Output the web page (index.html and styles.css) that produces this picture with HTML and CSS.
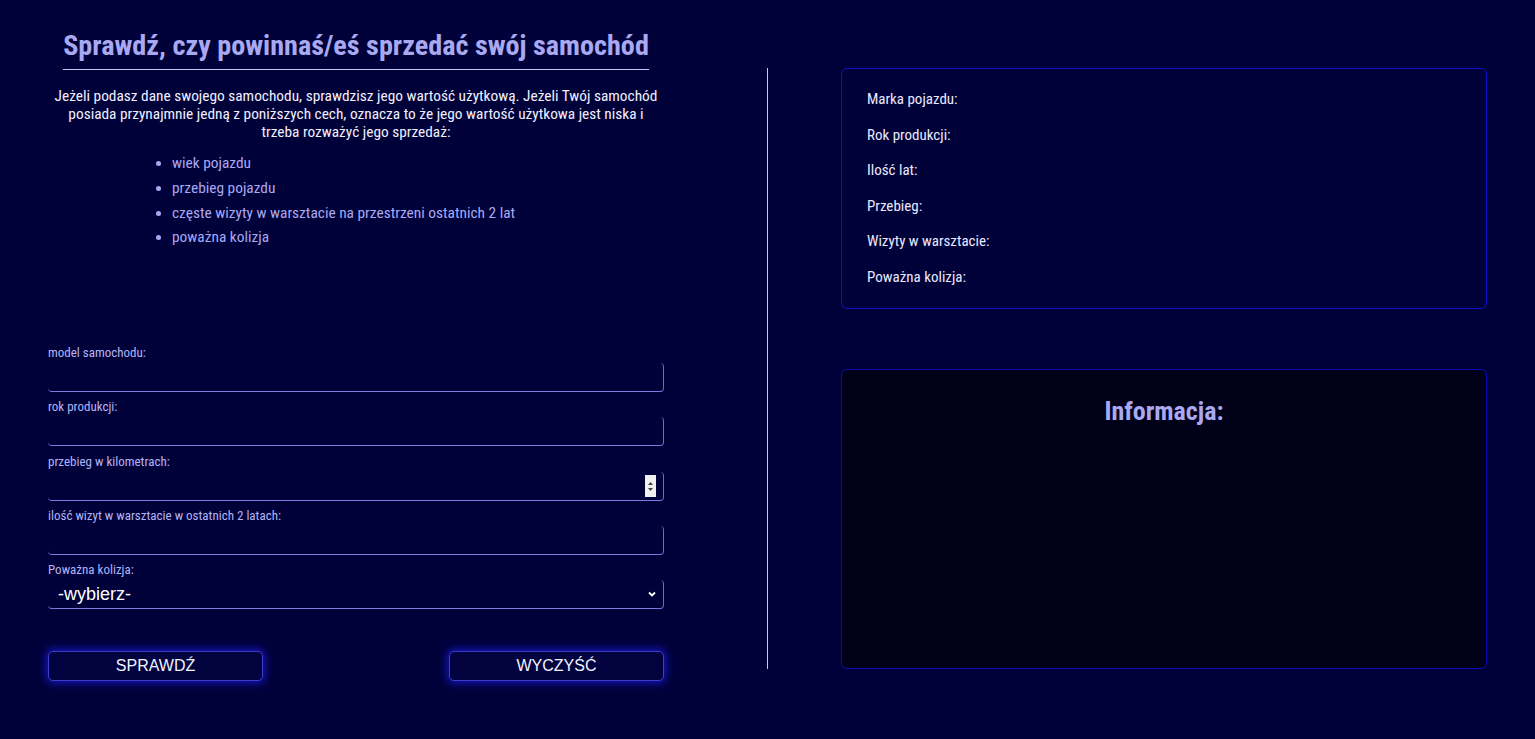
FILE: index.html
```html
<!DOCTYPE html>
<html lang="pl">
<head>
<meta charset="utf-8">
<title>Sprawdź samochód</title>
<link rel="stylesheet" href="styles.css">
</head>
<body>
<div class="page">
  <section class="left">
    <div class="head">
      <h1 class="title">Sprawdź, czy powinnaś/eś sprzedać swój samochód</h1>
    </div>
    <p class="intro">Jeżeli podasz dane swojego samochodu, sprawdzisz jego wartość użytkową. Jeżeli Twój samochód posiada przynajmnie jedną z poniższych cech, oznacza to że jego wartość użytkowa jest niska i trzeba rozważyć jego sprzedaż:</p>
    <ul class="features">
      <li>wiek pojazdu</li>
      <li>przebieg pojazdu</li>
      <li>częste wizyty w warsztacie na przestrzeni ostatnich 2 lat</li>
      <li>poważna kolizja</li>
    </ul>
    <form class="form">
      <label class="lbl">model samochodu:</label>
      <input class="field" type="text">
      <label class="lbl">rok produkcji:</label>
      <input class="field" type="text">
      <label class="lbl">przebieg w kilometrach:</label>
      <div class="field num"><span class="spin"><svg width="9" height="18" viewBox="0 0 9 18"><path d="M4.5 5 L7 8 L2 8 Z" fill="#444"/><path d="M4.5 14 L7 11 L2 11 Z" fill="#444"/></svg></span></div>
      <label class="lbl">ilość wizyt w warsztacie w ostatnich 2 latach:</label>
      <input class="field" type="text">
      <label class="lbl">Poważna kolizja:</label>
      <div class="field sel"><span>-wybierz-</span><svg width="10" height="8" viewBox="0 0 10 8"><path d="M2 2.5 L5 5.5 L8 2.5" stroke="#fff" stroke-width="1.8" fill="none"/></svg></div>
      <div class="buttons">
        <button type="button" class="btn">SPRAWDŹ</button>
        <button type="button" class="btn">WYCZYŚĆ</button>
      </div>
    </form>
  </section>
  <div class="divider"></div>
  <section class="right">
    <div class="summary">
      <p>Marka pojazdu:</p>
      <p>Rok produkcji:</p>
      <p>Ilość lat:</p>
      <p>Przebieg:</p>
      <p>Wizyty w warsztacie:</p>
      <p>Poważna kolizja:</p>
    </div>
    <div class="info">
      <h2>Informacja:</h2>
    </div>
  </section>
</div>
</body>
</html>
```
FILE: styles.css
```css
html, body {
  margin: 0;
  padding: 0;
  background: #01013a;
  height: 100%;
}
body {
  font-family: "Roboto", "Liberation Sans", sans-serif;
  font-stretch: condensed;
  color: #e8e8ff;
}
.page {
  display: flex;
  align-items: flex-start;
  padding-left: 48px;
}
.left {
  width: 616px;
}
.head {
  text-align: center;
  padding-top: 29px;
}
.title {
  display: inline-block;
  margin: 0;
  font-size: 28.2px;
  font-weight: 700;
  color: #a9a9f2;
  padding-bottom: 6px;
  border-bottom: 1px solid #c8c8ee;
  line-height: 34px;
}
.intro {
  margin: 17px 0 0;
  text-align: center;
  font-size: 15.35px;
  line-height: 18px;
  color: #f0f0ff;
}
.features {
  margin: 10px 0 0;
  padding-left: 124px;
  list-style: disc;
  color: #a9a9f2;
  font-size: 15.4px;
}
.features li {
  line-height: 24.8px;
}
.form {
  display: flex;
  flex-direction: column;
  margin-top: 95px;
}
.lbl {
  font-size: 13px;
  color: #b4b4f4;
  line-height: 15px;
  margin-bottom: 3px;
}
.field {
  box-sizing: border-box;
  height: 29px;
  width: 616px;
  margin: 0 0 7.3px;
  background: transparent;
  border: none;
  border-right: 1px solid #6a6ad0;
  border-bottom: 1px solid #7a7ae0;
  border-radius: 4px;
  color: #fff;
  outline: none;
  padding: 0 8px;
}
.num {
  display: flex;
  justify-content: flex-end;
  align-items: center;
  padding-right: 7px;
}
.spin {
  background: #f0f0f0;
  width: 11px;
  height: 22px;
  display: flex;
  align-items: center;
  justify-content: center;
}
.sel {
  display: flex;
  align-items: center;
  justify-content: space-between;
  font-family: "Liberation Sans", sans-serif;
  font-stretch: normal;
  font-size: 18px;
  padding: 0 6px 0 10px;
  margin-bottom: 0;
}
.buttons {
  display: flex;
  justify-content: space-between;
  margin-top: 42px;
}
.btn {
  width: 215px;
  height: 30px;
  background: #02023f;
  border: 1px solid #3c3cc8;
  border-radius: 5px;
  color: #f2f2ff;
  font-family: "Liberation Sans", sans-serif;
  font-size: 16px;
  box-shadow: 0 0 8px 2px rgba(30, 30, 235, 0.75);
  padding: 0;
}
.divider {
  width: 1px;
  height: 601px;
  background: #c8c8e8;
  margin: 68px 0 0 103px;
}
.right {
  width: 646px;
  margin: 68px 0 0 73px;
  display: flex;
  flex-direction: column;
}
.summary {
  box-sizing: border-box;
  height: 241px;
  border: 1px solid #1010c8;
  border-radius: 6px;
  padding: 20px 25px 0;
}
.summary p {
  margin: 0 0 15.5px;
  font-size: 15px;
  line-height: 20px;
  color: #eaeaff;
}
.info {
  box-sizing: border-box;
  margin-top: 60px;
  height: 300px;
  background: #000018;
  border: 1px solid #0c0cb8;
  border-radius: 6px;
  text-align: center;
}
.info h2 {
  margin: 26px 0 0;
  font-size: 26px;
  font-weight: 700;
  color: #a9a9f2;
}
```
